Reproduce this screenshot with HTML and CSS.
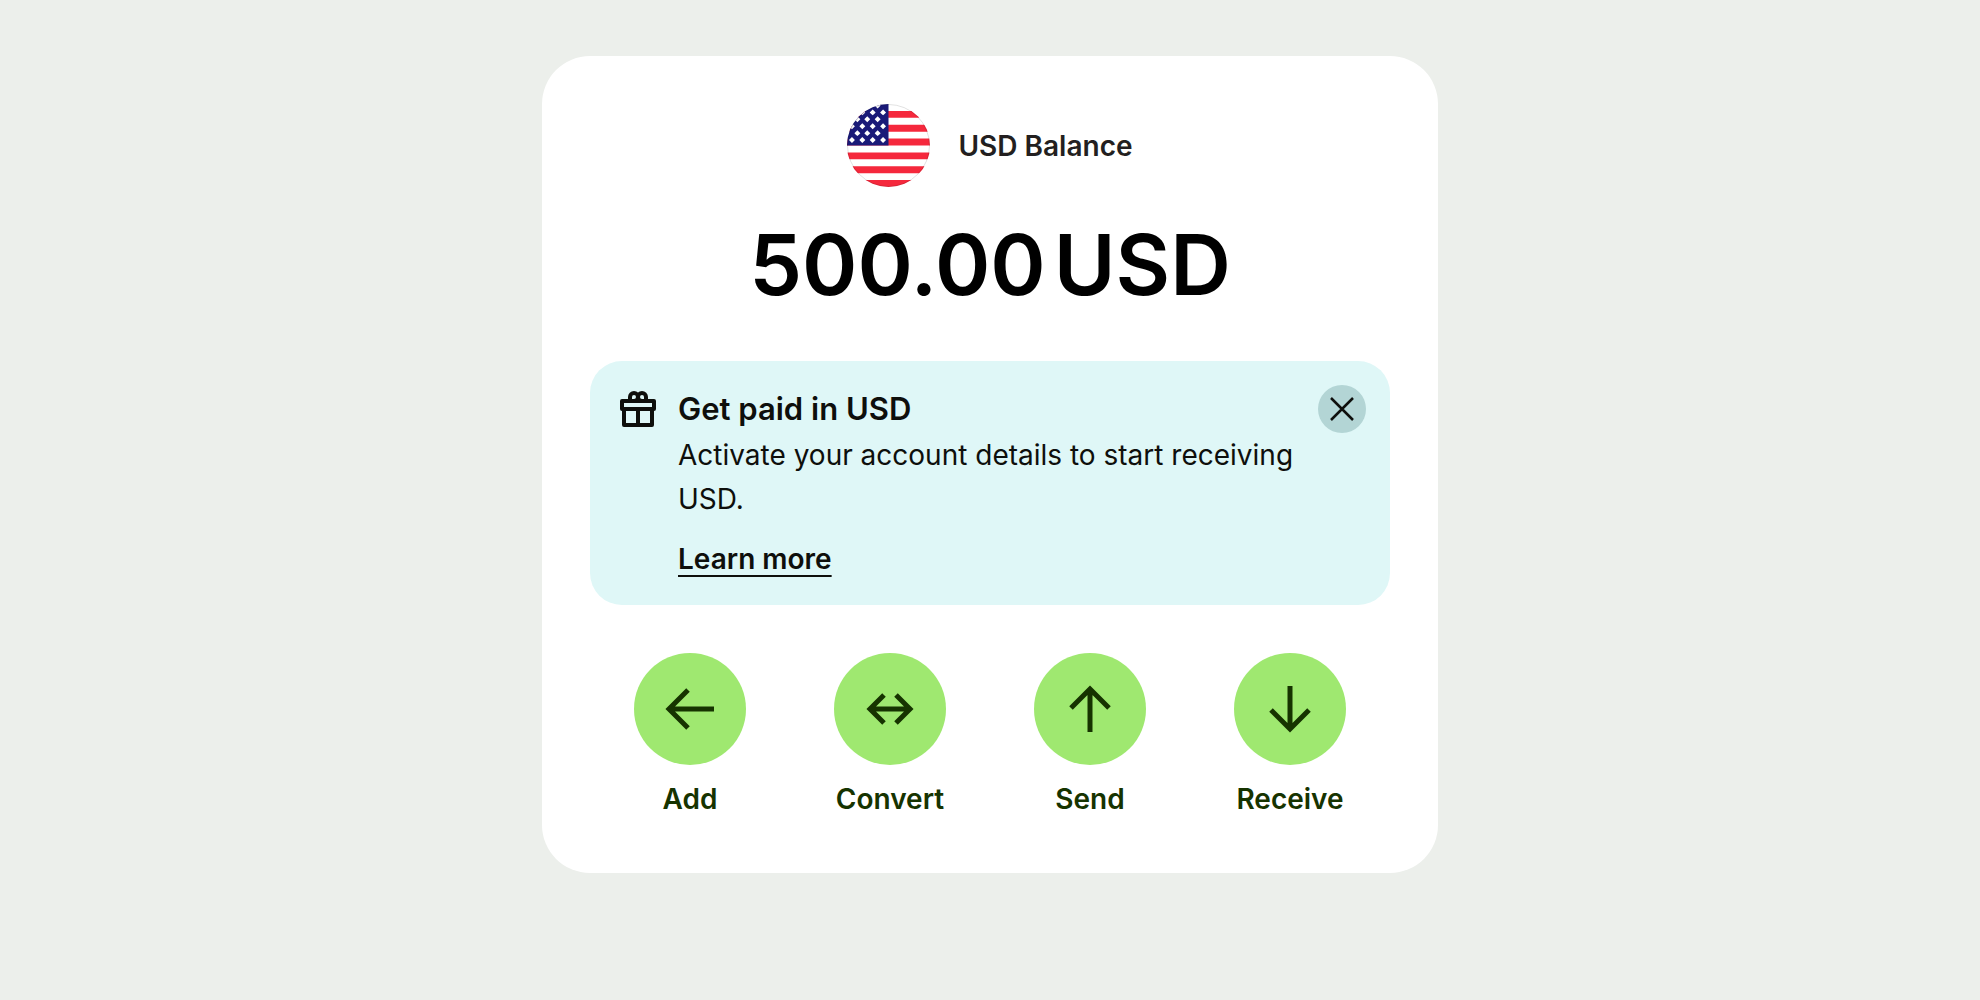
FILE: index.html
```
<!DOCTYPE html>
<html lang="en">

<head>
    <meta charset="UTF-8">
    <meta name="viewport" content="width=device-width, initial-scale=1.0">
    <title>USD Balance</title>
    <link rel="stylesheet" href="styles.css">
</head>
<body>
    <main class="card">
        <header class="balance">
            <svg class="flag" viewBox="0 0 84 84" aria-hidden="true">
                <defs>
                    <clipPath id="round"><circle cx="42" cy="42" r="42"/></clipPath>
                    <path id="star" d="M0-3 1.5-1.500 3 0 1.500 1.500 0 3-1.500 1.500-3 0-1.500-1.500Z"/>
                </defs>
                <g clip-path="url(#round)">
                    <path fill="#fff" d="M0 0h84v84H0z"/>
                    <path fill="#f5283c" d="M0 7h84v7H0zM0 21h84v7H0zM0 35h84v7H0zM0 49h84v7H0zM0 63h84v7H0zM0 77h84v7H0z"/>
                    <path fill="#1a1a78" d="M0 0h42v42H0z"/>
                    <g fill="#fff">
                        <use href="#star" x="31" y="1.5"/>
                        <use href="#star" x="15.5" y="8.5"/><use href="#star" x="26" y="8.5"/><use href="#star" x="36.5" y="8.5"/>
                        <use href="#star" x="10.5" y="15.5"/><use href="#star" x="20.5" y="15.5"/><use href="#star" x="31" y="15.5"/>
                        <use href="#star" x="5" y="22.5"/><use href="#star" x="15.5" y="22.5"/><use href="#star" x="26" y="22.5"/><use href="#star" x="36.5" y="22.5"/>
                        <use href="#star" x="10.5" y="29.5"/><use href="#star" x="20.5" y="29.5"/><use href="#star" x="31" y="29.5"/>
                        <use href="#star" x="5" y="36.5"/><use href="#star" x="15.5" y="36.5"/><use href="#star" x="26" y="36.5"/><use href="#star" x="36.5" y="36.5"/>
                    </g>
                </g>
                <circle cx="42" cy="42" r="41.5" fill="none" stroke="#000" stroke-opacity=".12"/>
            </svg>
            <h1>USD Balance</h1>
        </header>
        <p class="amount"><span>500.00</span><span>USD</span></p>

        <section class="alert">
            <svg class="gift" viewBox="0 0 48 48" aria-hidden="true">
                <g fill="none" stroke="#0e0f0c" stroke-width="4" stroke-linejoin="round">
                    <path d="M8 16h32v8H8zM10 24v16h28V24M24 24v16"/>
                    <path d="M16 15v-3a4 4 0 0 1 8 0 4 4 0 0 1 8 0v3M24 12a4 4 0 0 1-4 4M24 12a4 4 0 0 0 4 4"/>
                </g>
            </svg>
            <div class="alert-body">
                <h2>Get paid in USD</h2>
                <p>Activate your account details to start receiving USD.</p>
                <a href="#">Learn more</a>
            </div>
            <button class="close" aria-label="Close">
                <svg viewBox="0 0 48 48"><path d="m13 13 22 22M35 13 13 35"/></svg>
            </button>
        </section>

        <nav class="actions">
            <button class="action">
                <svg viewBox="0 0 112 112"><path d="M80 56H35M54 37 35 56l19 19"/></svg>
                <span>Add</span>
            </button>
            <button class="action">
                <svg viewBox="0 0 112 112"><path d="M36 56h40M50 42 36 56l14 14M62 42l14 14-14 14"/></svg>
                <span>Convert</span>
            </button>
            <button class="action">
                <svg viewBox="0 0 112 112"><path d="M56 79V36M37 55l19-19 19 19"/></svg>
                <span>Send</span>
            </button>
            <button class="action">
                <svg viewBox="0 0 112 112"><path d="M56 33v43M37 57l19 19 19-19"/></svg>
                <span>Receive</span>
            </button>
        </nav>
    </main>
</body>

</html>
```
FILE: styles.css
```
*, *:before, *:after {box-sizing: border-box;}
* {margin: 0;padding: 0;}
body {padding: 56px 24px;background: #ecefeb;color: #0e0f0c;font: 400 28px/44px Inter, "Liberation Sans", sans-serif;}
button {border: none;background: none;color: inherit;font: inherit;cursor: pointer;}
svg {display: block;flex: none;}

.card {max-width: 896px;margin: 0 auto;padding: 48px 48px 52px;background: #fff;border-radius: 48px;}

.balance {display: flex;align-items: center;justify-content: center;gap: 28px;}
.flag {width: 83px;height: 83px;}
.balance h1 {color: #231f20;font-size: 28px;font-weight: 600;}
.amount {display: flex;justify-content: center;gap: 8px;margin: 26px 0 44px;color: #000;font-size: 84px;font-weight: 600;line-height: 104px;}

.alert {display: flex;align-items: flex-start;gap: 16px;padding: 24px;background: #dff7f7;border-radius: 32px;}
.gift {width: 48px;height: 48px;}
.alert-body {flex: 1;}
.alert h2 {font-size: 31px;font-weight: 600;line-height: 48px;}
.alert a {display: inline-block;margin-top: 16px;color: inherit;font-weight: 600;text-decoration-thickness: 2px;text-underline-offset: 6px;text-decoration-skip-ink: none;vertical-align: top;}
.close {flex: none;width: 48px;height: 48px;background: #b3d5d5;border-radius: 50%;}
.close svg {fill: none;stroke: #0e0f0c;stroke-width: 2.5;}

.actions {display: grid;grid-template-columns: repeat(4, 1fr);margin-top: 48px;color: #163300;font-weight: 600;}
.action {display: flex;flex-direction: column;align-items: center;gap: 12px;font-weight: 600;}
.action svg {width: 112px;height: 112px;background: #9fe870;border-radius: 50%;fill: none;stroke: #163300;stroke-width: 5;}
```
